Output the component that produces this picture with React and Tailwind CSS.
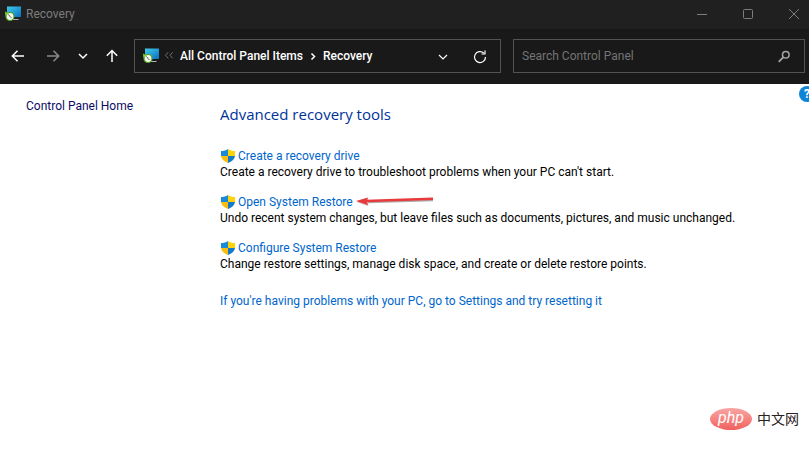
function RecoveryIcon() {
  return (
    <svg width="16" height="16" viewBox="0 0 16 16" className="shrink-0" aria-hidden="true">
      <defs>
        <linearGradient id="screen" x1="0" y1="0" x2="1" y2="1">
          <stop offset="0" stopColor="#3fcdea" />
          <stop offset="1" stopColor="#0b6fc0" />
        </linearGradient>
      </defs>
      <rect x="2" y="0.500" width="14" height="10.500" fill="url(#screen)" />
      <path d="M8 13.500h5.500" stroke="#a9b4bb" strokeWidth="1" />
      <circle cx="5" cy="10.500" r="4" fill="#f4f6f2" stroke="#4ea51c" strokeWidth="1.200" />
      <path d="M0 5.500l.3 4.200 3.500-2.300z" fill="#7ed321" />
      <path d="M3.500 8.500L5 10.500l1.500 1.500" stroke="#444" strokeWidth=".9" fill="none" />
    </svg>
  );
}

function Shield() {
  return (
    <svg width="16" height="16" viewBox="0 0 16 16" className="shrink-0" aria-hidden="true">
      <path d="M8 1C6 2.400 3.600 3 1 3v5h7z" fill="#1a8ad6" />
      <path d="M8 1c2 1.400 4.400 2 7 2v5H8z" fill="#fdd209" />
      <path d="M1 8c.4 3.200 3.200 5.600 7 7V8z" fill="#f9bd12" />
      <path d="M15 8c-.4 3.200-3.200 5.600-7 7V8z" fill="#1479c9" />
    </svg>
  );
}

function Stroke({ d, size = 16, width = 1.5 }) {
  return (
    <svg width={size} height={size} viewBox="0 0 16 16" fill="none" stroke="currentColor" strokeWidth={width} className="shrink-0" aria-hidden="true">
      <path d={d} />
    </svg>
  );
}

function Arrow() {
  return (
    <svg width="84" height="16" viewBox="0 0 84 16" className="ml-px shrink-0" aria-hidden="true">
      <path d="M14 8.300L79 6.300" stroke="#8d8585" strokeWidth="2" opacity=".7" />
      <path d="M3 8L14.500 4L13 7L14.500 12z" fill="#9a6a6a" opacity=".6" />
      <path d="M12 7L79 4.800" stroke="#e8393c" strokeWidth="2.400" />
      <path d="M2 7L14 3.500L12.500 7L14 11z" fill="#e8393c" />
    </svg>
  );
}

const tools = [
  {
    title: "Create a recovery drive",
    text: "Create a recovery drive to troubleshoot problems when your PC can't start.",
  },
  {
    title: "Open System Restore",
    text: "Undo recent system changes, but leave files such as documents, pictures, and music unchanged.",
    marked: true,
  },
  {
    title: "Configure System Restore",
    text: "Change restore settings, manage disk space, and create or delete restore points.",
  },
];

function TitleBar() {
  return (
    <header className="flex h-[29px] items-center justify-between bg-[#202020] pr-[7px] pb-[2px] pl-[5px] text-[#7d7d7d]">
      <div className="flex items-center gap-[5px]">
        <RecoveryIcon />
        <h1>Recovery</h1>
      </div>
      <div className="flex gap-[30px]">
        <button type="button" aria-label="Minimize"><Stroke d="M3 8.500h10" width={1} /></button>
        <button type="button" aria-label="Maximize">
          <svg width="16" height="16" fill="none" stroke="currentColor" aria-hidden="true"><rect x="3.500" y="3.500" width="9" height="9" rx="1" /></svg>
        </button>
        <button type="button" aria-label="Close"><Stroke d="M3 3l10 10M13 3L3 13" width={1} /></button>
      </div>
    </header>
  );
}

function Toolbar() {
  return (
    <div className="flex h-[55px] items-center bg-[#191919] pr-1 pb-px pl-[10px] text-white">
      <nav className="flex w-[124px] shrink-0 items-center" aria-label="History">
        <button type="button" aria-label="Back"><Stroke d="M14 8H2.500M7.500 2.800L2.300 8l5.200 5.200" /></button>
        <button type="button" aria-label="Forward" className="ml-[19px] text-[#8a8a8a]"><Stroke d="M2 8h11.500M8.500 2.800L13.700 8l-5.200 5.200" /></button>
        <button type="button" aria-label="Recent locations" className="ml-[14px]"><Stroke d="M4 6l4 4 4-4" /></button>
        <button type="button" aria-label="Up" className="ml-[13px]"><Stroke d="M8 14V2.500M2.800 7.700L8 2.500l5.200 5.200" /></button>
      </nav>
      <div className="flex h-[34px] min-w-0 flex-[345] items-center border border-[#535353] pr-3 pl-2">
        <RecoveryIcon />
        <span className="ml-[5px] text-[#707070]"><Stroke d="M5.500 3L2 7l3.500 4M11.500 3L8 7l3.500 4" size={12} width={1.300} /></span>
        <a href="#items" className="ml-1 font-medium whitespace-nowrap">All Control Panel Items</a>
        <span className="mx-[2px]"><Stroke d="M6.500 5.500l3 3-3 3" /></span>
        <a href="#recovery" className="font-medium">Recovery</a>
        <button type="button" aria-label="Previous locations" className="mr-[21px] ml-auto"><Stroke d="M4 7l4 4 4-4" width={1.200} /></button>
        <button type="button" aria-label="Refresh">
          <Stroke d="M13.500 9a5.500 5.500 0 1 1-1.800-4M13 2.500V6H9.500" width={1.200} />
        </button>
      </div>
      <label className="ml-3 flex h-[34px] min-w-0 flex-[270] items-center border border-[#535353] pr-3 pl-2">
        <input type="text" aria-label="Search Control Panel" placeholder="Search Control Panel" className="min-w-0 flex-1 bg-transparent outline-none placeholder:text-[#747474]" />
        <svg width="16" height="16" viewBox="0 0 16 16" fill="none" stroke="#a5a5a5" aria-hidden="true">
          <circle cx="9.800" cy="6.700" r="3.300" strokeWidth="1.500" />
          <path d="M7.400 9.100L2.700 13.800" strokeWidth="1.800" />
        </svg>
      </label>
    </div>
  );
}

export default function App() {
  return (
    <div className="relative flex min-h-screen flex-col overflow-hidden bg-white font-['Roboto','Open_Sans','Noto_Sans_CJK_SC',sans-serif] text-[12px] leading-4">
      <TitleBar />
      <Toolbar />
      <div className="relative flex flex-1">
        <aside className="w-[220px] shrink-0 pt-[14px] pl-[26px]">
          <a href="#home" className="text-[#0c0c66]">Control Panel Home</a>
        </aside>
        <main className="pt-[18px]">
          <h2 className="font-['Open_Sans','Noto_Sans',sans-serif] text-[15px] leading-6 text-[#003399]">Advanced recovery tools</h2>
          <ul className="mt-[22px] flex flex-col gap-[14px]">
            {tools.map((tool) => (
              <li key={tool.title}>
                <div className="flex h-4 items-center">
                  <a href="#tool" className="flex items-center gap-[2px] text-[#0066cc]">
                    <Shield />
                    {tool.title}
                  </a>
                  {tool.marked && <Arrow />}
                </div>
                <p className="text-black">{tool.text}</p>
              </li>
            ))}
          </ul>
          <a href="#reset" className="mt-[21px] block text-[#0066cc]">
            If you're having problems with your PC, go to Settings and try resetting it
          </a>
        </main>
        <button type="button" aria-label="Help" className="absolute top-[2px] right-[-6px] size-4 rounded-full bg-[#0d84d8] text-[12px] leading-4 font-bold text-white">?</button>
      </div>
      <div className="absolute right-[10px] bottom-[22px] flex items-center gap-[5px]">
        <span className="flex h-[22px] w-[42px] items-center justify-center rounded-[50%] bg-linear-to-b from-[#f7a5a3] to-[#f0605f] pb-[2px] text-[16px] text-white italic">php</span>
        <span className="text-[14px] text-[#2b2020]">中文网</span>
      </div>
    </div>
  );
}
